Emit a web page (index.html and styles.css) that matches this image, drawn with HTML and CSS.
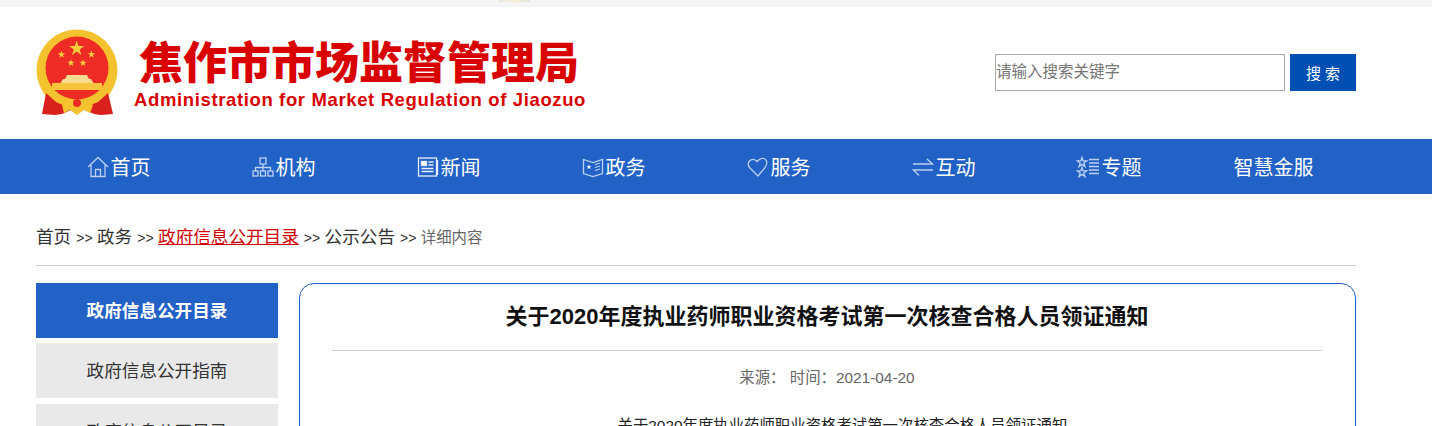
FILE: index.html
```html
<!DOCTYPE html>
<html lang="zh-CN">
<head>
    <meta charset="UTF-8">
    <meta name="viewport" content="width=device-width, initial-scale=1.0">
    <title>焦作市市场监督管理局</title>
    <link rel="stylesheet" href="styles.css">
</head>
<body>
<div class="page">
    <div class="topbar"><span class="topbar-mark"></span></div>

    <div class="wrap header">
        <div class="logo">
            <svg class="emblem" width="84" height="88" viewBox="0 0 84 88">
                <defs>
                    <polygon id="star" vector-effect="non-scaling-stroke" points="0,-1 .225,-.309 .951,-.309 .363,.118 .588,.809 0,.382 -.588,.809 -.363,.118 -.951,-.309 -.225,-.309"/>
                </defs>
                <circle cx="41" cy="41" r="40.5" fill="#f4c22f"/>
                <circle cx="41" cy="39" r="31.5" fill="#ee2b24"/>
                <g fill="#f7cf3d">
                    <use href="#star" transform="translate(40.7 19.5) scale(8)"/>
                    <use href="#star" transform="translate(25.5 25.5) scale(4)"/>
                    <use href="#star" transform="translate(55.5 25.5) scale(4)"/>
                    <use href="#star" transform="translate(35 34) scale(3.8)"/>
                    <use href="#star" transform="translate(47 34) scale(3.8)"/>
                </g>
                <path d="M27 50h28l3 5H24z" fill="#f9dc8f"/>
                <path d="M31 46h20l2 4H29z" fill="#f9dc8f"/>
                <rect x="16" y="54" width="50" height="7" fill="#f6c53c"/>
                <path d="M10 64L6 85l13 1 7-1 16-7 16 7 7 1 12-1-5-21-10 9-10 4H29l-9-4z" fill="#d8201c"/>
                <path d="M26 76l8-6h15l8 6-3 8-6-3-7 5-7-5-6 3z" fill="#f4c22f"/>
                <circle cx="41" cy="74" r="4" fill="#ee2b24"/>
            </svg>
            <div class="logo-text">
                <div class="logo-cn">焦作市市场监督管理局</div>
                <div class="logo-en">Administration for Market Regulation of Jiaozuo</div>
            </div>
        </div>
        <form class="search">
            <input class="search-input" type="text" placeholder="请输入搜索关键字">
            <button class="search-btn" type="button">搜 索</button>
        </form>
    </div>

    <div class="nav">
        <ul class="wrap nav-list">
            <li class="nav-item">
                <svg class="nav-icon" width="22" height="22" viewBox="0 0 22 22"><path d="M1 11L11 1.500 21 11M4 9v11.500h14V9M8.500 20.500v-7h5v7"/></svg>
                首页
            </li>
            <li class="nav-item">
                <svg class="nav-icon" width="22" height="22" viewBox="0 0 22 22"><rect x="8" y="2" width="6" height="6"/><rect x="1" y="15" width="5" height="5"/><rect x="8.500" y="15" width="5" height="5"/><rect x="16" y="15" width="5" height="5"/><path d="M11 8v7M3.500 15v-3.500h15V15"/></svg>
                机构
            </li>
            <li class="nav-item">
                <svg class="nav-icon icon-bright" width="22" height="22" viewBox="0 0 22 22"><rect x="1.500" y="2" width="18" height="18"/><path d="M20.500 4v15"/><rect x="4.500" y="5.500" width="5" height="4" fill="#fff"/><path d="M11.500 6h5M11.500 9h5M4.500 12.500h12M4.500 15.500h12"/></svg>
                新闻
            </li>
            <li class="nav-item">
                <svg class="nav-icon" width="22" height="22" viewBox="0 0 22 22"><path d="M1.500 3.500l9.500 3 9.500-3v14l-9.500 3-9.500-3zM13 8.500l5-1.500M13 11.500l5-1.500M13 14.500l5-1.500"/><use href="#star" transform="translate(7 11) scale(2.800)" fill="#fff" stroke="none"/></svg>
                政务
            </li>
            <li class="nav-item">
                <svg class="nav-icon" width="22" height="22" viewBox="0 0 22 22"><path d="M11 20L2.500 11.500C0.500 9 1 6 3 4.500c2.500-1.800 5.500-1 7 1L13 3c3-1.500 5.500-.5 6.500 2 .7 2.500 0 4.500-1.500 6.500z"/></svg>
                服务
            </li>
            <li class="nav-item">
                <svg class="nav-icon" width="22" height="22" viewBox="0 0 22 22"><path d="M1 8h19.500L15 3M21 14H1.500L7 19.500"/></svg>
                互动
            </li>
            <li class="nav-item">
                <svg class="nav-icon" width="24" height="22" viewBox="0 0 24 22"><use href="#star" transform="translate(6 6.500) scale(5)"/><use href="#star" transform="translate(6 16.500) scale(5)"/><path d="M13 3.500h10M13 7h10M13 10.500h10M13 14h10M13 17.500h10"/></svg>
                专题
            </li>
            <li class="nav-item">智慧金服</li>
        </ul>
    </div>

    <div class="wrap">
        <div class="crumbs">
            <a class="crumb">首页</a><span class="crumb-sep">&gt;&gt;</span>
            <a class="crumb">政务</a><span class="crumb-sep">&gt;&gt;</span>
            <a class="crumb crumb-link">政府信息公开目录</a><span class="crumb-sep">&gt;&gt;</span>
            <a class="crumb">公示公告</a><span class="crumb-sep">&gt;&gt;</span>
            <span class="crumb-last">详细内容</span>
        </div>

        <div class="main">
            <div class="side">
                <div class="side-item active">政府信息公开目录</div>
                <div class="side-item">政府信息公开指南</div>
                <div class="side-item">政府信息公开目录</div>
            </div>
            <div class="article">
                <h1 class="article-title">关于2020年度执业药师职业资格考试第一次核查合格人员领证通知</h1>
                <div class="article-meta">来源： 时间：2021-04-20</div>
                <p class="article-body">关于2020年度执业药师职业资格考试第一次核查合格人员领证通知</p>
            </div>
        </div>
    </div>
</div>
</body>
</html>
```

FILE: styles.css
```css
* {
    box-sizing: border-box;
}
html, body {
    margin: 0;
    padding: 0;
}
body {
    font-family: "Liberation Sans", "Noto Sans CJK SC", sans-serif;
    background-color: #fff;
    color: #333;
}
.page {
    height: 426px;
    overflow: hidden;
}
.wrap {
    width: 1320px;
    margin-left: 36px;
}

/* top strip */
.topbar {
    height: 7px;
    background-color: #f5f5f5;
    padding-left: 498px;
}
.topbar-mark {
    display: block;
    width: 32px;
    height: 2px;
    background: linear-gradient(90deg, #e8e8e4, #f6f0d4, #dce6e2);
}

/* header */
.header {
    height: 132px;
    display: flex;
    justify-content: space-between;
    align-items: flex-start;
}
.logo {
    display: flex;
    padding-top: 22px;
}
.emblem {
    flex: none;
}
.logo-text {
    margin-left: 14px;
    color: #d90000;
}
.logo-cn {
    font-family: "Noto Sans CJK SC", sans-serif;
    font-weight: 900;
    font-size: 44px;
    line-height: 44px;
    margin-top: 9px;
    margin-left: 5px;
    white-space: nowrap;
}
.logo-en {
    font-weight: bold;
    font-size: 18.500px;
    letter-spacing: .63px;
    line-height: 22px;
    margin-top: 7px;
    white-space: nowrap;
}
.search {
    display: flex;
    margin: 47px 0 0;
}
.search-input {
    width: 290px;
    height: 37px;
    border: 1px solid #a9a9a9;
    padding: 0 1px 2px 0;
    font-family: inherit;
    font-size: 15.500px;
    outline: none;
}
.search-input::placeholder {
    color: #757575;
}
.search-btn {
    width: 66px;
    height: 37px;
    margin-left: 5px;
    background-color: #0050b3;
    color: #fff;
    border: none;
    font-family: inherit;
    font-size: 15px;
}

/* nav */
.nav {
    height: 55px;
    background-color: #2262c6;
}
.nav-list {
    display: flex;
    height: 55px;
    margin-top: 0;
    margin-bottom: 0;
    padding: 0;
    list-style: none;
}
.nav-item {
    width: 165px;
    display: flex;
    justify-content: center;
    align-items: center;
    gap: 2px;
    color: #fff;
    font-size: 20px;
}
.nav-icon {
    flex: none;
    fill: none;
    stroke: #bcd0ef;
    stroke-width: 1.300;
}
.icon-bright {
    stroke: #e8effa;
}

/* breadcrumb */
.crumbs {
    height: 72px;
    padding-top: 31px;
    line-height: 24px;
    border-bottom: 1px solid #ccc;
    white-space: nowrap;
}
.crumb {
    font-size: 17.600px;
    color: #333;
}
.crumb-link {
    color: #d00000;
    text-decoration: underline;
}
.crumb-sep {
    font-size: 14px;
    margin-left: 5px;
    color: #333;
}
.crumb-last {
    font-size: 15.400px;
    color: #666;
}

/* main */
.main {
    display: flex;
    align-items: flex-start;
    margin-top: 17px;
    gap: 21px;
}
.side {
    width: 242px;
    flex: none;
    display: flex;
    flex-direction: column;
    gap: 5.300px;
}
.side-item {
    height: 55px;
    line-height: 57px;
    text-align: center;
    font-size: 17.600px;
    background-color: #e9e9e9;
    color: #333;
}
.side-item.active {
    background-color: #2262c6;
    color: #fff;
    font-weight: bold;
}
.article {
    flex: 1;
    min-height: 500px;
    border: 1px solid #2262c6;
    border-radius: 15px;
    padding: 0 33px 0 32px;
}
.article-title {
    margin: 0;
    height: 67px;
    padding-top: 17px;
    line-height: 32px;
    font-size: 22px;
    font-weight: bold;
    text-align: center;
    color: #111;
    border-bottom: 1px solid #ccc;
}
.article-meta {
    margin-top: 15px;
    line-height: 24px;
    font-size: 15.400px;
    text-align: center;
    color: #666;
}
.article-body {
    margin: 24px 0 0;
    line-height: 24px;
    font-size: 15.400px;
    text-indent: 2em;
    text-align: center;
    color: #222;
}
```
